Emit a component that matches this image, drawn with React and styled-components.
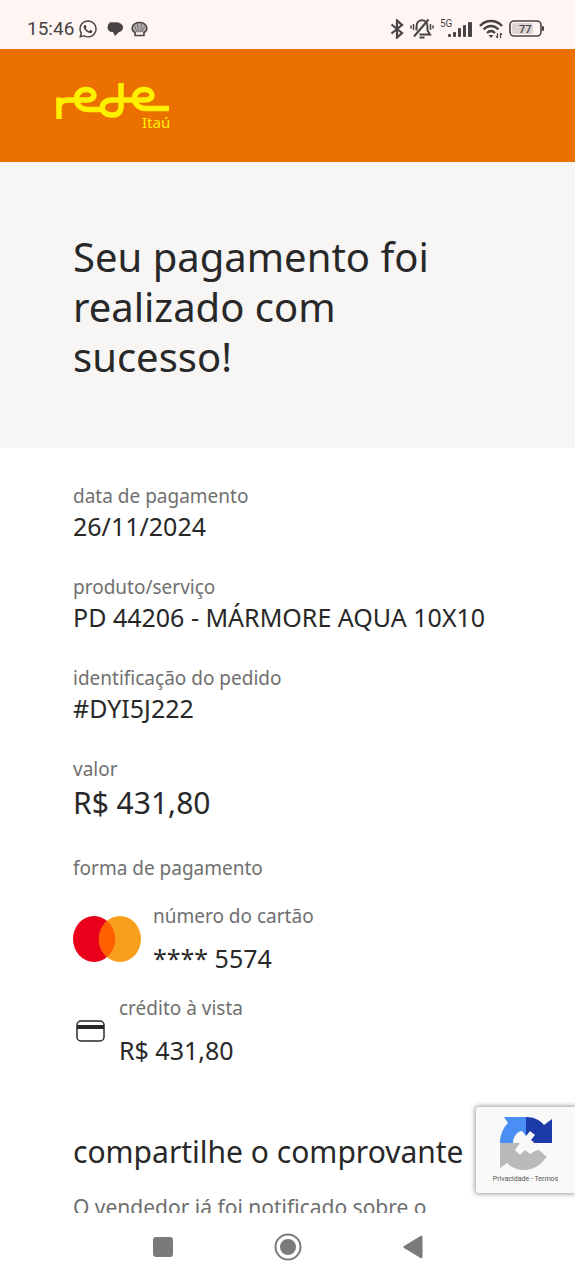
import React from 'react';
import styled, { createGlobalStyle } from 'styled-components';
import { FaWhatsapp } from 'react-icons/fa';

const GlobalStyle = createGlobalStyle`
  * {
    box-sizing: border-box;
  }

  body {
    margin: 0;
    background-color: #ffffff;
    color: #282828;
    font-family: 'Noto Sans', 'Open Sans', sans-serif;
  }
`;

const Screen = styled.div`
  position: relative;
  display: flex;
  flex-direction: column;
  height: 100vh;
  overflow: hidden;
`;

const StatusBar = styled.div`
  flex: none;
  display: flex;
  align-items: center;
  justify-content: space-between;
  padding: 8px 30px 0 27px;
  height: 49px;
  background-color: #fff6f4;
  color: #484344;
`;

const StatusGroup = styled.div`
  display: flex;
  align-items: center;
  gap: ${({ $gap }) => $gap}px;
`;

const Clock = styled.time`
  font-family: Roboto, sans-serif;
  font-size: 19px;
  line-height: 24px;
`;

const Page = styled.div`
  flex: 1;
  min-height: 0;
  overflow-y: auto;
  scrollbar-width: none;
`;

const Header = styled.header`
  display: flex;
  padding: 31px 54px;
  height: 113px;
  background-color: #ec7000;
`;

const Hero = styled.section`
  padding: 70px 120px 66px 73px;
  background-color: #f7f6f5;
`;

const Title = styled.h1`
  margin: 0;
  font-size: 40px;
  font-weight: 400;
  line-height: 50px;
`;

const Receipt = styled.main`
  padding: 35px 73px;
`;

const Details = styled.dl`
  display: flex;
  flex-direction: column;
  gap: 32px;
  margin: 0;
`;

const Label = styled.dt`
  font-size: 19px;
  line-height: 27px;
  color: #6f6f6f;
`;

const Value = styled.dd`
  margin: 0;
  font-size: ${({ $large }) => ($large ? 30 : 25)}px;
  line-height: ${({ $large }) => ($large ? 40 : 32)}px;
  white-space: nowrap;
`;

const Methods = styled.div`
  display: flex;
  flex-direction: column;
  gap: 21px;
  margin-top: 21px;
`;

const Method = styled.div`
  display: flex;
  align-items: center;
  gap: 12px;
`;

const MethodText = styled.dl`
  display: flex;
  flex-direction: column;
  gap: 12px;
  margin: 0;
`;

const ShareTitle = styled.h2`
  margin: 66px 0 20px;
  font-size: 30px;
  font-weight: 400;
  line-height: 40px;
  white-space: nowrap;
`;

const ShareText = styled.p`
  margin: 0;
  font-size: 21px;
  line-height: 30px;
  color: #6f6f6f;
`;

const Captcha = styled.aside`
  position: absolute;
  right: 0;
  bottom: 87px;
  display: flex;
  flex-direction: column;
  align-items: center;
  gap: 3px;
  padding-top: 9px;
  width: 99px;
  height: 86px;
  border-radius: 3px 0 0 3px;
  background-color: #f9f9f9;
  box-shadow: 0 0 5px 1px #999999;
`;

const CaptchaLinks = styled.div`
  font-family: Roboto, sans-serif;
  font-size: 7px;
  line-height: 12px;
  color: #555555;

  a {
    color: inherit;
    text-decoration: none;
  }
`;

const NavBar = styled.nav`
  flex: none;
  display: grid;
  grid-template-columns: repeat(3, 125px);
  justify-content: center;
  height: 67px;
  background-color: #ffffff;
`;

const NavButton = styled.button`
  display: flex;
  align-items: center;
  justify-content: center;
  padding: 0;
  border: 0;
  background: none;
  color: #7a7a7a;
`;

const ChatIcon = () => (
  <svg width="17" height="16" viewBox="0 0 17 16" fill="currentColor">
    <path d="M4 1h7a3 3 0 0 1 3 3H7a4 4 0 0 0-3 5L3 7a4 4 0 0 1 1-6z" opacity="0.7" />
    <path d="M6 2h6a4.500 4.500 0 0 1 1 9l-4 4-2-4H6a4.500 4.500 0 0 1 0-9z" />
  </svg>
);

const ShellIcon = () => (
  <svg width="17" height="16" viewBox="0 0 17 16" fill="none" stroke="currentColor">
    <path d="M4 14.500v-3C-1 9 1 1.500 8.500 1.500S18 9 13 11.500v3z" fill="#b5afaf" strokeWidth="1.500" />
    <path d="M6 11 3.500 5M7.500 11 6.500 3M9.500 11l1-8M11 11l2.500-6" strokeWidth="0.600" />
    <path d="M5 12.500h7" stroke="#fff6f4" strokeWidth="2" />
  </svg>
);

const BluetoothIcon = () => (
  <svg width="14" height="20" viewBox="0 0 14 20" fill="none" stroke="currentColor" strokeWidth="2.200">
    <path d="M1.500 5.500 12 14l-5 4.500v-17L12 6 1.500 14.500" />
  </svg>
);

const MutedBellIcon = () => (
  <svg width="24" height="21" viewBox="0 0 24 21" fill="none" stroke="currentColor" strokeWidth="2">
    <path d="M6.500 12.500V8.500C6.500 0 17.500 0 17.500 8.500v4l2.500 4H9.500" />
    <path d="M4 18.500 18.500 1.500M9.500 19.500h5" />
    <path d="M3.500 6v6M1 7.500v3M20.500 6v6M23 7.500v3" strokeWidth="1.500" />
  </svg>
);

const SignalIcon = () => (
  <svg width="33" height="20" viewBox="0 0 33 20" fill="currentColor">
    <text x="0" y="8" fontFamily="Roboto, sans-serif" fontSize="10">5G</text>
    <rect x="8" y="15" width="3" height="3" rx="1" />
    <rect x="13" y="13" width="3" height="5" rx="1" />
    <rect x="18" y="9" width="3" height="9" rx="1" />
    <rect x="23" y="6" width="3" height="12" rx="1" />
    <rect x="28" y="3" width="4" height="15" rx="1" />
  </svg>
);

const WifiIcon = () => (
  <svg width="24" height="20" viewBox="0 0 24 20" fill="none" stroke="currentColor" strokeWidth="2.400">
    <path d="M1 7c6-6.600 16-6.600 22 0M4.500 10.500c4.500-4.600 10.500-4.600 15 0M8 14c2.500-2.600 5.500-2.600 8 0" />
    <path d="M9.500 16h5L12 19z" fill="currentColor" stroke="none" />
    <path d="M18.500 14v5M21.500 14v5M17 17l1.500 2M23 16l-1.500-2" strokeWidth="1.200" />
  </svg>
);

const BatteryIcon = () => (
  <svg width="36" height="18" viewBox="0 0 36 18">
    <rect x="1" y="1" width="31" height="15" rx="4" fill="none" stroke="currentColor" strokeWidth="1.600" />
    <rect x="3" y="3" width="21" height="11" rx="2" fill="#dcd5d4" />
    <rect x="33" y="6" width="2" height="5" rx="1" fill="currentColor" />
    <text x="10" y="13" fontFamily="Roboto, sans-serif" fontSize="11" fontWeight="500" fill="currentColor">77</text>
  </svg>
);

const RedeLogo = () => (
  <svg width="120" height="52" viewBox="54 80 120 52" role="img" aria-label="rede Itaú">
    <g fill="none" stroke="#fff000" strokeWidth="5.500">
      <path d="M59 119V97.500" />
      <path d="M59 106c1-4 4-6 9-6h19c10 0 9-10.500-1-10.500-13 0-13 20 2 20h15" />
      <path d="M121 83v24c0 5-3 8-9 8-13 0-13-15 0-15h33c10 0 9-10.500-1-10.500-13 0-13 19 2 19h23" />
    </g>
    <text x="142" y="128" fontFamily="Noto Sans, sans-serif" fontSize="15" fill="#fff000">Itaú</text>
  </svg>
);

const MastercardLogo = () => (
  <svg width="68" height="46" viewBox="0 0 68 46" role="img" aria-label="Mastercard">
    <ellipse cx="21" cy="23" rx="21" ry="23" fill="#eb001b" />
    <ellipse cx="47" cy="23" rx="21" ry="23" fill="#f79e1b" />
    <path d="M34 5c11 9 11 27 0 36-11-9-11-27 0-36z" fill="#ff5f00" />
  </svg>
);

const CardIcon = () => (
  <svg width="34" height="24" viewBox="0 0 34 24">
    <rect x="4" y="2" width="27" height="20" rx="4" fill="none" stroke="#282828" strokeWidth="1.500" />
    <path d="M4 6h27v4H4z" fill="#282828" />
  </svg>
);

const RecaptchaLogo = () => (
  <svg width="54" height="54" viewBox="0 0 54 54" role="img" aria-label="reCAPTCHA">
    <path d="M27 1v26H1C1 19 4 12 9 7L5 1z" fill="#4a90f4" />
    <path d="M27 1c8 0 14 3 18 8l8-6v24H27z" fill="#1c3aa9" />
    <path d="M1 27h46v14c-9 15-28 17-39 6l-7 5z" fill="#bababa" />
    <path d="M14 27c0-7 5-12 9-12l4 5 4-5 5 4-4 5 4 3h17v14h-6l-9-7-7 4-5-4-5 5-5-5 5-7z" fill="#f9f9f9" />
    <path d="M34 27h19L45 19z" fill="#1c3aa9" />
    <path d="M18 38l12 2 10-6 8 7-12 9H20z" fill="#bababa" />
  </svg>
);

const Field = ({ label, value, large }) => (
  <div>
    <Label>{label}</Label>
    {value && <Value $large={large}>{value}</Value>}
  </div>
);

const PaymentMethod = ({ icon, label, value }) => (
  <Method>
    {icon}
    <MethodText>
      <Label>{label}</Label>
      <Value>{value}</Value>
    </MethodText>
  </Method>
);

const App = () => {
  return (
    <Screen>
      <GlobalStyle />
      <StatusBar>
        <StatusGroup $gap={8}>
          <StatusGroup $gap={4}>
            <Clock>15:46</Clock>
            <FaWhatsapp size={20} />
          </StatusGroup>
          <ChatIcon />
          <ShellIcon />
        </StatusGroup>
        <StatusGroup $gap={6}>
          <BluetoothIcon />
          <MutedBellIcon />
          <SignalIcon />
          <WifiIcon />
          <BatteryIcon />
        </StatusGroup>
      </StatusBar>

      <Page>
        <Header>
          <RedeLogo />
        </Header>
        <Hero>
          <Title>Seu pagamento foi realizado com sucesso!</Title>
        </Hero>
        <Receipt>
          <Details>
            <Field label="data de pagamento" value="26/11/2024" />
            <Field label="produto/serviço" value="PD 44206 - MÁRMORE AQUA 10X10" />
            <Field label="identificação do pedido" value="#DYI5J222" />
            <Field label="valor" value="R$ 431,80" large />
            <Field label="forma de pagamento" />
          </Details>
          <Methods>
            <PaymentMethod icon={<MastercardLogo />} label="número do cartão" value="**** 5574" />
            <PaymentMethod icon={<CardIcon />} label="crédito à vista" value="R$ 431,80" />
          </Methods>
          <ShareTitle>compartilhe o comprovante</ShareTitle>
          <ShareText>O vendedor já foi notificado sobre o pagamento.</ShareText>
        </Receipt>
      </Page>

      <Captcha>
        <RecaptchaLogo />
        <CaptchaLinks>
          <a href="#privacidade">Privacidade</a> - <a href="#termos">Termos</a>
        </CaptchaLinks>
      </Captcha>

      <NavBar>
        <NavButton aria-label="Recentes">
          <svg width="20" height="20" viewBox="0 0 20 20" fill="currentColor">
            <rect width="20" height="20" rx="3" />
          </svg>
        </NavButton>
        <NavButton aria-label="Início">
          <svg width="28" height="28" viewBox="0 0 28 28" fill="none" stroke="currentColor" strokeWidth="2">
            <circle cx="14" cy="14" r="12.500" />
            <circle cx="14" cy="14" r="8" fill="currentColor" stroke="none" />
          </svg>
        </NavButton>
        <NavButton aria-label="Voltar">
          <svg width="20" height="24" viewBox="0 0 20 24" fill="currentColor">
            <path d="M1 11 17.500 1q2-1 2 1v20q0 2-2 1L1 13q-1.500-1 0-2z" />
          </svg>
        </NavButton>
      </NavBar>
    </Screen>
  );
};

export default App;
